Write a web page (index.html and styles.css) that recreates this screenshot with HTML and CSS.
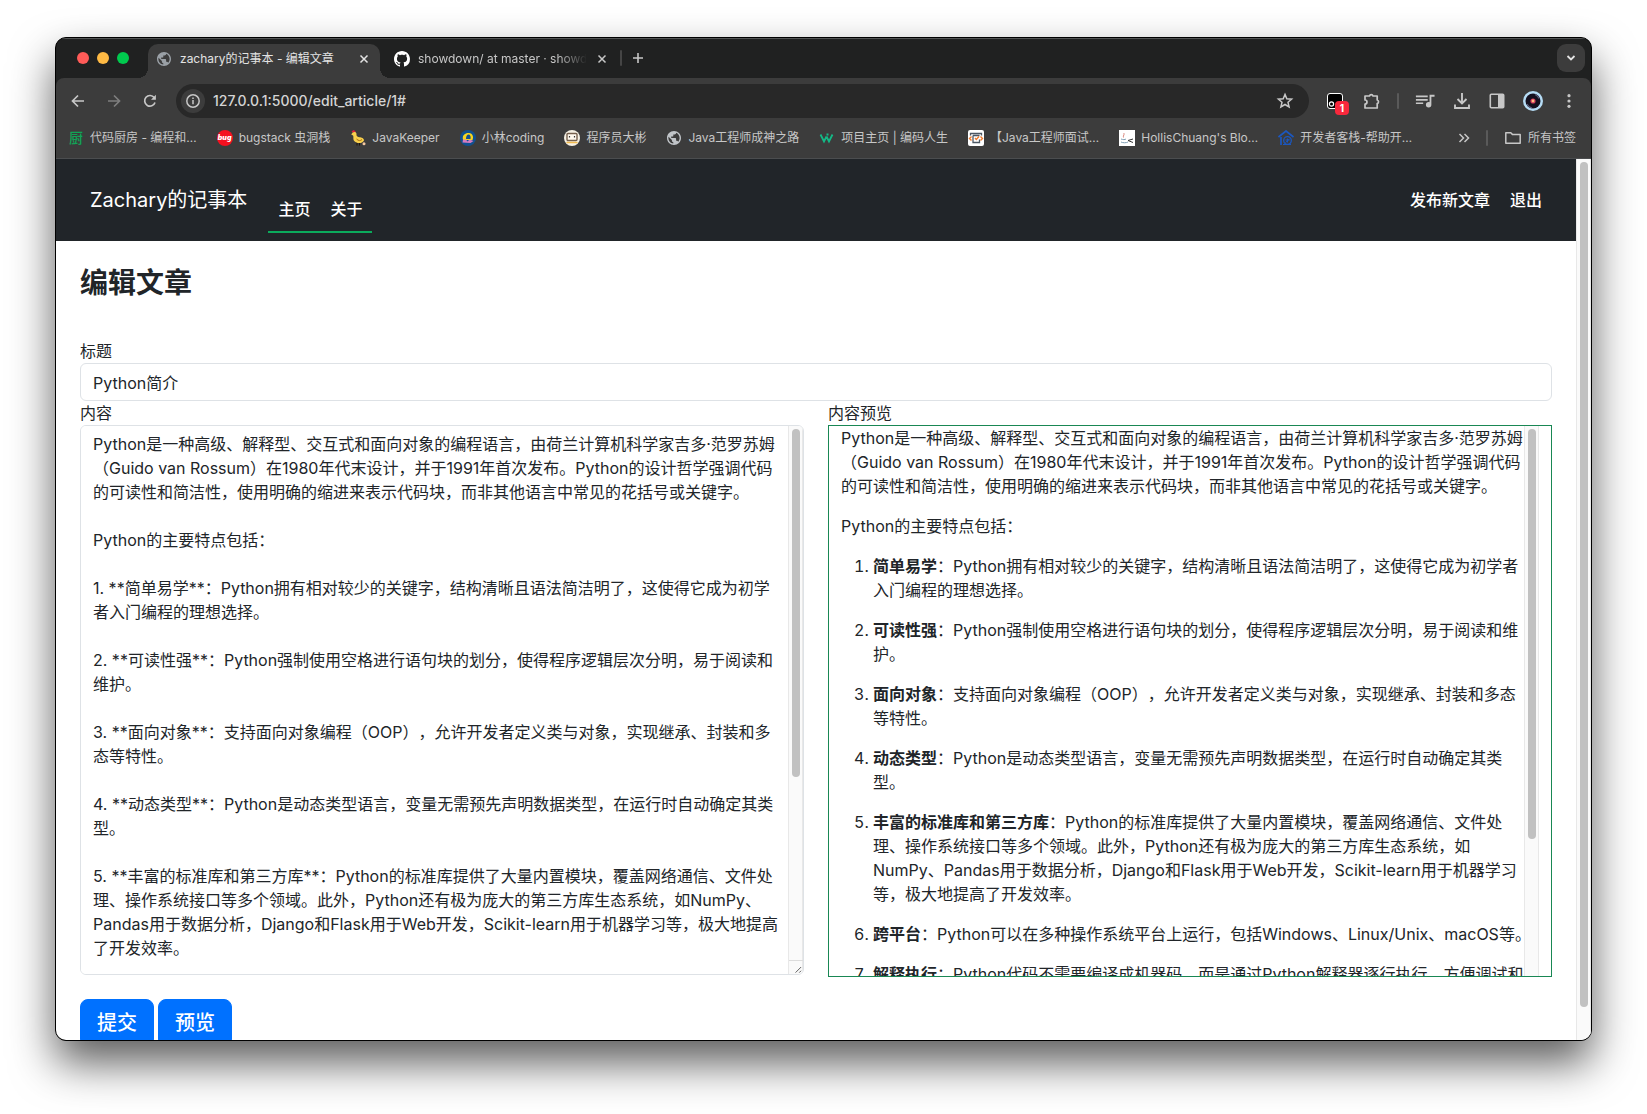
FILE: index.html
```html
<!DOCTYPE html>
<html lang="zh-CN">
<head>
<meta charset="utf-8">
<title>zachary的记事本 - 编辑文章</title>
<link rel="stylesheet" href="styles.css">
</head>
<body>
<svg class="defs" aria-hidden="true">
  <symbol id="globe" viewBox="2 2 20 20"><path fill="currentColor" d="M12 2C6.480 2 2 6.480 2 12s4.480 10 10 10 10-4.480 10-10S17.520 2 12 2zm-1 17.930c-3.950-.490-7-3.850-7-7.930 0-.620.080-1.210.210-1.790L9 15v1c0 1.100.900 2 2 2v1.930zm6.900-2.540c-.260-.810-1-1.390-1.900-1.390h-1v-3c0-.550-.450-1-1-1H8v-2h2c.550 0 1-.450 1-1V7h2c1.100 0 2-.900 2-2v-.410c2.930 1.190 5 4.060 5 7.410 0 2.080-.800 3.970-2.100 5.390z"/></symbol>
  <symbol id="close" viewBox="0 0 10 10"><path d="M1.500 1.500l7 7M8.500 1.500l-7 7" stroke="currentColor" stroke-width="1.500" fill="none"/></symbol>
</svg>
<div class="window">
  <header class="tabstrip">
    <div class="lights"><span class="light red"></span><span class="light amber"></span><span class="light green"></span></div>
    <div class="tab active">
      <svg class="globe"><use href="#globe"/></svg>
      <span class="tab-title">zachary的记事本 - 编辑文章</span>
      <button class="tab-close" aria-label="关闭标签页"><svg width="10" height="10"><use href="#close"/></svg></button>
    </div>
    <div class="tab">
      <svg width="16" height="16" viewBox="0 0 16 16"><path fill="#fff" d="M8 0C3.580 0 0 3.580 0 8c0 3.540 2.290 6.530 5.470 7.590.400.070.550-.170.550-.380 0-.190-.010-.820-.010-1.490-2.010.370-2.530-.490-2.690-.940-.090-.230-.480-.940-.820-1.130-.280-.150-.680-.520-.010-.530.630-.010 1.080.580 1.230.820.720 1.210 1.870.870 2.330.660.070-.520.280-.870.510-1.070-1.780-.200-3.640-.890-3.640-3.950 0-.870.310-1.590.820-2.150-.080-.200-.360-1.020.080-2.120 0 0 .670-.210 2.200.820.640-.180 1.320-.270 2-.270s1.360.090 2 .270c1.530-1.040 2.200-.820 2.200-.820.440 1.100.160 1.920.080 2.120.510.560.820 1.270.820 2.150 0 3.070-1.870 3.750-3.650 3.950.290.250.540.730.540 1.480 0 1.070-.010 1.930-.010 2.200 0 .210.150.460.550.380A8.010 8.010 0 0 0 16 8c0-4.420-3.580-8-8-8z"/></svg>
      <span class="tab-title fade">showdown/ at master · showdown</span>
      <button class="tab-close" aria-label="关闭标签页"><svg width="10" height="10"><use href="#close"/></svg></button>
    </div>
    <span class="divider"></span>
    <button class="new-tab" aria-label="新标签页"><svg width="12" height="12" viewBox="0 0 12 12"><path d="M6 1v10M1 6h10" stroke="currentColor" stroke-width="1.600"/></svg></button>
    <button class="tab-search" aria-label="搜索标签页"><svg width="10" height="10" viewBox="0 0 10 10"><path d="M1.500 3l3.500 3.500L8.500 3" stroke="currentColor" stroke-width="1.800" fill="none"/></svg></button>
  </header>

  <div class="chrome">
    <div class="toolbar">
      <div class="nav-buttons">
        <button aria-label="后退"><svg width="14" height="14" viewBox="0 0 14 14"><path d="M13 7H2M7 1.500L1.500 7 7 12.500" stroke="currentColor" stroke-width="1.700" fill="none"/></svg></button>
        <button class="dim" aria-label="前进"><svg width="14" height="14" viewBox="0 0 14 14"><path d="M1 7h11M7 1.500L12.500 7 7 12.500" stroke="currentColor" stroke-width="1.700" fill="none"/></svg></button>
        <button aria-label="重新加载"><svg width="14" height="14" viewBox="0 0 14 14"><path d="M12 8.500A5.300 5.300 0 1 1 11.200 3.600" stroke="currentColor" stroke-width="1.700" fill="none"/><path d="M12.900.800v5H8z" fill="currentColor"/></svg></button>
      </div>
      <div class="omnibox">
        <button class="site-info" aria-label="查看网站信息"><svg width="16" height="16" viewBox="0 0 16 16"><circle cx="8" cy="8" r="6.200" fill="none" stroke="currentColor" stroke-width="1.500"/><path d="M8 7v4.200M8 4.600v1.500" stroke="currentColor" stroke-width="1.500"/></svg></button>
        <input class="url" type="text" aria-label="地址" value="127.0.0.1:5000/edit_article/1#">
        <button aria-label="收藏"><svg width="18" height="18" viewBox="0 0 18 18"><path d="M9 2.400l1.800 4.400 4.800.400-3.600 3.100 1.100 4.700L9 12.500 4.900 15 6 10.300 2.400 7.200l4.800-.400z" stroke="currentColor" stroke-width="1.500" fill="none"/></svg></button>
      </div>
      <div class="actions">
        <button class="ext" aria-label="扩展"><svg width="16" height="16" viewBox="0 0 16 16"><rect x=".5" y=".5" width="15" height="15" rx="2.500" fill="#000" stroke="#fff"/><circle cx="4.500" cy="11" r="2.100" fill="none" stroke="#fff" stroke-width="1.200"/></svg><span class="badge">1</span></button>
        <button aria-label="扩展程序"><svg width="18" height="18" viewBox="0 0 18 18"><path d="M2 4h4.500a1.800 1.800 0 0 1 3.500 0H14.200v4a1.900 1.900 0 0 1 0 3.600V16H2v-4a2 2 0 0 0 0-4z" stroke="currentColor" stroke-width="1.700" stroke-linejoin="round" fill="none"/></svg></button>
        <span class="divider"></span>
        <button aria-label="媒体控件"><svg width="20" height="20" viewBox="1 1 22 22"><path fill="currentColor" d="M15 6H2v1.800h13V6zm0 3.800H2v1.800h13V9.800zM2 15.400h8v-1.800H2v1.800zM17 5v8.400c-.300-.100-.650-.200-1-.200a3 3 0 1 0 3 3V7.300h3.500V5z"/></svg></button>
        <button aria-label="下载"><svg width="18" height="18" viewBox="0 0 18 18"><path d="M9 1v10M4.500 7L9 11.500 13.500 7M2 12.500V16h14v-3.500" stroke="currentColor" stroke-width="1.900" fill="none"/></svg></button>
        <button aria-label="侧边栏"><svg width="16" height="16" viewBox="0 0 16 16"><rect x="1.300" y="1.300" width="13.400" height="13.400" rx="1" stroke="currentColor" stroke-width="1.600" fill="none"/><path d="M9 1h5.500v14H9z" fill="currentColor"/></svg></button>
        <button aria-label="个人资料"><svg width="20" height="20" viewBox="0 0 20 20"><circle cx="10" cy="10" r="10" fill="#b5dcf5"/><circle cx="10" cy="10" r="7.500" fill="#14101f"/><path d="M4 13a7 7 0 0 0 5 4M12 3.500a7 7 0 0 1 4 4" stroke="#5a5e7c" stroke-width="1.200" fill="none"/><circle cx="10" cy="10" r="2.600" fill="#d03a5c"/><circle cx="10" cy="10" r="1.400" fill="#ffc080"/></svg></button>
        <button aria-label="更多"><svg width="16" height="16" viewBox="0 0 16 16" fill="currentColor"><circle cx="8" cy="2.700" r="1.600"/><circle cx="8" cy="8" r="1.600"/><circle cx="8" cy="13.300" r="1.600"/></svg></button>
      </div>
    </div>
    <nav class="bookmarks" aria-label="书签栏">
      <a href="#"><span class="char-icon">厨</span>代码厨房 - 编程和…</a>
      <a href="#"><span class="bug-icon">bug</span>bugstack 虫洞栈</a>
      <a href="#"><svg width="16" height="16" viewBox="0 0 16 16"><path d="M7 12v3.500M9.500 12v3.500" stroke="#1d1208"/><path d="M1.200 4.500L3 2C5 1 7 2.500 6.500 5c0 1.500 1.500 2 3 2.300 2 .300 4.500.700 4.500 3.200-1.500 3-7 3.600-9.500.800C2.500 9 4 7 3 5.500z" fill="#f8cf4c"/><path d="M6.500 9c2 2 4 2 5.500.500" stroke="#a86f13" fill="none"/><path d="M1.500 1.500L3.500 0l2.500 1.500-3 1z" fill="#d8213c"/><circle cx="14" cy="13.800" r="1.500" fill="#f6c8a0"/></svg>JavaKeeper</a>
      <a href="#"><svg width="16" height="16" viewBox="0 0 16 16"><circle cx="8" cy="8" r="8" fill="#10508f"/><path d="M3 10C1.800 4.500 6 2.600 9 3c3.600.400 5 4 3.500 7z" fill="#f6d51d"/><path d="M6 9c0-3 1-4.500 2.500-4.500S11 6 10.500 9z" fill="#14508f"/><path d="M3 9.500h3l1.500 2 2-2 4 1.500-3 2-8-.500z" fill="#d67cc0"/></svg>小林coding</a>
      <a href="#"><svg width="16" height="16" viewBox="0 0 16 16"><circle cx="8" cy="8" r="8" fill="#f6f1e4"/><rect x="3" y="3.500" width="10" height="7" rx="1" fill="#fff9ee" stroke="#75604d" stroke-width="1.400"/><path d="M5.500 6v1.500M10.500 6v1.500" stroke="#333" stroke-width="1.200"/><path d="M2.500 12.500h11" stroke="#f2bb4f" stroke-width="1.500"/></svg>程序员大彬</a>
      <a href="#"><svg class="globe"><use href="#globe"/></svg>Java工程师成神之路</a>
      <a href="#"><svg width="16" height="16" viewBox="0 0 16 16"><path d="M1.500 4.500L5 11.500l2.500-5M7.500 6.500L10 11.500l3.500-7M7.500 4.500h2" stroke="#14b886" stroke-width="1.800" fill="none"/></svg>项目主页 | 编码人生</a>
      <a href="#"><svg width="16" height="16" viewBox="0 0 16 16"><rect width="16" height="16" rx="2" fill="#fff"/><path d="M2.500 5.500v-2h11v2M5 5.500v7h6.500v-3M5 5.500h6.500" stroke="#4c5763" stroke-width="1.300" fill="none"/><path d="M3.500 6.500L1.500 8.500l2 2M12.500 6.500l2 2-2 2M7 8l1.300 1.500L11 6.500" stroke="#ee7a2d" stroke-width="1.400" fill="none"/></svg>【Java工程师面试…</a>
      <a href="#"><svg width="16" height="16" viewBox="0 0 16 16"><path d="M0 0h16v16H0z" fill="#fff"/><path d="M4.500 3c2 1-1 2.500 0 4.500" stroke="#dc8a80" fill="none"/><path d="M2 9c2 .800 4 .800 5 0M2 12c2 1 5 1 7 0" stroke="#7f9fb5" fill="none"/><path d="M14 9l-5 1.500 5 2" stroke="#333" fill="none"/></svg>HollisChuang's Blo…</a>
      <a href="#"><svg width="16" height="16" viewBox="0 0 16 16"><path d="M.500 7L8 1l7.500 6M3 7v8" stroke="#1b57c0" stroke-width="1.700" fill="none"/><circle cx="9.500" cy="10.500" r="3.800" stroke="#1b57c0" stroke-width="1.300" fill="none"/><path d="M7.500 10h4M9.500 8.500v4M5 14.500h8M7.500 12.500l4-3.500" stroke="#1b57c0"/></svg>开发者客栈-帮助开…</a>
      <button class="more" aria-label="更多书签"><svg width="12" height="12" viewBox="0 0 12 12"><path d="M1.500 2l4 4-4 4M6.500 2l4 4-4 4" stroke="currentColor" stroke-width="1.500" fill="none"/></svg></button>
      <span class="divider"></span>
      <a class="all" href="#"><svg width="18" height="16" viewBox="0 0 18 16"><path d="M1.800 13.200V2.800h5l1.800 1.800h7.600v8.600z" stroke="currentColor" stroke-width="1.500" stroke-linejoin="round" fill="none"/></svg>所有书签</a>
    </nav>
  </div>

  <div class="viewport">
    <div class="page">
      <nav class="navbar">
        <a class="brand" href="#">Zachary的记事本</a>
        <div class="menu"><a href="#">主页</a><a href="#">关于</a></div>
        <div class="account"><a href="#">发布新文章</a><a href="#">退出</a></div>
      </nav>
      <main>
        <h1>编辑文章</h1>
        <form>
          <label for="title">标题</label>
          <input class="title-input" id="title" type="text" value="Python简介">
          <div class="columns">
            <div class="column">
              <label for="content">内容</label>
              <div class="editor">
<textarea id="content">Python是一种高级、解释型、交互式和面向对象的编程语言，由荷兰计算机科学家吉多·范罗苏姆（Guido van Rossum）在1980年代末设计，并于1991年首次发布。Python的设计哲学强调代码的可读性和简洁性，使用明确的缩进来表示代码块，而非其他语言中常见的花括号或关键字。

Python的主要特点包括：

1. **简单易学**：Python拥有相对较少的关键字，结构清晰且语法简洁明了，这使得它成为初学者入门编程的理想选择。

2. **可读性强**：Python强制使用空格进行语句块的划分，使得程序逻辑层次分明，易于阅读和维护。

3. **面向对象**：支持面向对象编程（OOP），允许开发者定义类与对象，实现继承、封装和多态等特性。

4. **动态类型**：Python是动态类型语言，变量无需预先声明数据类型，在运行时自动确定其类型。

5. **丰富的标准库和第三方库**：Python的标准库提供了大量内置模块，覆盖网络通信、文件处理、操作系统接口等多个领域。此外，Python还有极为庞大的第三方库生态系统，如NumPy、Pandas用于数据分析，Django和Flask用于Web开发，Scikit-learn用于机器学习等，极大地提高了开发效率。
</textarea>
                <div class="scrollbar"><span class="thumb editor-thumb"></span><svg class="grip" viewBox="0 0 14 14"><path d="M6.500 12.500l6-6M10.500 12.500l2-2" stroke="#555"/></svg></div>
              </div>
            </div>
            <div class="column">
              <div class="label">内容预览</div>
              <div class="preview">
                <div class="rendered">
                  <p>Python是一种高级、解释型、交互式和面向对象的编程语言，由荷兰计算机科学家吉多·范罗苏姆（Guido van Rossum）在1980年代末设计，并于1991年首次发布。Python的设计哲学强调代码的可读性和简洁性，使用明确的缩进来表示代码块，而非其他语言中常见的花括号或关键字。</p>
                  <p>Python的主要特点包括：</p>
                  <ol>
                    <li><p><strong>简单易学</strong>：Python拥有相对较少的关键字，结构清晰且语法简洁明了，这使得它成为初学者入门编程的理想选择。</p></li>
                    <li><p><strong>可读性强</strong>：Python强制使用空格进行语句块的划分，使得程序逻辑层次分明，易于阅读和维护。</p></li>
                    <li><p><strong>面向对象</strong>：支持面向对象编程（OOP），允许开发者定义类与对象，实现继承、封装和多态等特性。</p></li>
                    <li><p><strong>动态类型</strong>：Python是动态类型语言，变量无需预先声明数据类型，在运行时自动确定其类型。</p></li>
                    <li><p><strong>丰富的标准库和第三方库</strong>：Python的标准库提供了大量内置模块，覆盖网络通信、文件处理、操作系统接口等多个领域。此外，Python还有极为庞大的第三方库生态系统，如NumPy、Pandas用于数据分析，Django和Flask用于Web开发，Scikit-learn用于机器学习等，极大地提高了开发效率。</p></li>
                    <li><p class="single"><strong>跨平台</strong>：Python可以在多种操作系统平台上运行，包括Windows、Linux/Unix、macOS等。</p></li>
                    <li><p class="single"><strong>解释执行</strong>：Python代码不需要编译成机器码，而是通过Python解释器逐行执行，方便调试和</p></li>
                  </ol>
                </div>
                <div class="scrollbar"><span class="thumb preview-thumb"></span></div>
              </div>
            </div>
          </div>
          <div class="buttons">
            <button class="btn" type="button">提交</button>
            <button class="btn" type="button">预览</button>
          </div>
        </form>
      </main>
    </div>
    <div class="scrollbar"><span class="thumb page-thumb"></span></div>
  </div>
</div>
</body>
</html>
```
FILE: styles.css
```css
* { box-sizing: border-box; }

body {
  margin: 0;
  height: 100vh;
  padding: 37px 55px 73px;
  overflow: hidden;
  background: #fff;
  color: #212529;
  font: 16px/24px Inter, "Noto Sans CJK SC", sans-serif;
  text-spacing-trim: space-all;
}

button, input, textarea { font: inherit; color: inherit; }
button { border: 0; padding: 0; background: none; }
a { color: inherit; text-decoration: none; }
svg { display: block; flex: none; }
.defs { position: absolute; width: 0; height: 0; }

.window {
  display: flex;
  flex-direction: column;
  height: 100%;
  border: 1px solid #000;
  border-radius: 11px;
  overflow: hidden;
  background: #202121;
  box-shadow: 0 22px 44px rgba(0, 0, 0, .64);
}

/* Tab strip */
.tabstrip {
  display: flex;
  align-items: center;
  flex: none;
  height: 40px;
  padding: 0 6px 0 21px;
  box-shadow: inset 0 1px #525454;
  font-size: 12px;
  color: #c7c7c7;
}
.lights { display: flex; gap: 8px; margin-right: 19px; }
.light { width: 12px; height: 12px; border-radius: 50%; }
.red { background: #ff5b58; }
.amber { background: #ffba44; }
.green { background: #00ca4e; }
.tab {
  display: flex;
  align-items: center;
  align-self: flex-end;
  width: 232px;
  height: 34px;
  padding: 0 4px 5px 14px;
}
.tab.active {
  position: relative;
  padding: 0 10px 5px 8px;
  border-radius: 10px 10px 0 0;
  background: #3c3c3c;
  color: #e3e3e3;
}
.tab.active::before, .tab.active::after {
  content: "";
  position: absolute;
  bottom: 0;
  width: 10px;
  height: 10px;
}
.tab.active::before { left: -10px; background: radial-gradient(circle at 0 0, transparent 10px, #3c3c3c 10px); }
.tab.active::after { right: -10px; background: radial-gradient(circle at 100% 0, transparent 10px, #3c3c3c 10px); }
.globe { width: 14px; height: 14px; margin: 0 1px; color: #9aa0a6; }
.tab-title { flex: 1; margin: 0 9px 0 8px; overflow: hidden; white-space: nowrap; }
.fade { -webkit-mask-image: linear-gradient(to right, #000 82%, transparent); mask-image: linear-gradient(to right, #000 82%, transparent); }
.tab .tab-close { width: 12px; display: flex; justify-content: center; }
.divider { width: 2px; height: 16px; border-radius: 1px; background: #5a5a5a; }
.tabstrip .divider { background: #454545; margin-left: 8px; }
.new-tab { width: 32px; display: flex; justify-content: center; }
.tab-search {
  display: flex;
  align-items: center;
  justify-content: center;
  width: 28px;
  height: 28px;
  margin-left: auto;
  border-radius: 9px;
  background: #3c3c3c;
  color: #e3e3e3;
}

/* Toolbar and bookmarks */
.chrome {
  flex: none;
  border-radius: 8px 8px 0 0;
  border-bottom: 1px solid #4b4d4f;
  background: #3c3c3c;
  color: #c7c7c7;
}
.toolbar { display: flex; align-items: center; height: 46px; padding: 0 14px 0 15px; }
.nav-buttons { display: flex; gap: 22px; margin-right: 19px; }
.dim { color: #7e7e7e; }
.omnibox {
  display: flex;
  align-items: center;
  flex: 1;
  height: 34px;
  padding: 0 15px 0 5px;
  border-radius: 17px;
  background: #282828;
}
.site-info {
  display: flex;
  align-items: center;
  justify-content: center;
  width: 24px;
  height: 24px;
  margin-right: 8px;
  border-radius: 50%;
  background: #3c3c3c;
}
.url { flex: 1; padding: 0; border: 0; outline: 0; background: none; color: #d4d4d4; font-size: 14px; font-weight: 500; }
.actions { display: flex; align-items: center; gap: 18px; margin-left: 18px; }
.actions .divider { margin: 0 -2px; }
.ext { position: relative; margin-right: 2px; }
.badge {
  position: absolute;
  left: 8px;
  top: 8px;
  width: 14px;
  height: 14px;
  border-radius: 4px;
  background: #f8283c;
  color: #fff;
  font-size: 10px;
  font-weight: 700;
  line-height: 14px;
}
.bookmarks {
  display: flex;
  align-items: center;
  gap: 20px;
  height: 34px;
  padding: 0 15px 6px 12px;
  font-size: 12px;
  white-space: nowrap;
}
.bookmarks a { display: flex; align-items: center; gap: 6px; }
.bookmarks .globe { color: #c0c4c8; }
.char-icon { width: 16px; color: #10a557; font-size: 14px; font-weight: 500; text-align: center; }
.bug-icon {
  width: 16px;
  height: 16px;
  border-radius: 50%;
  background: #f5101f;
  color: #fff;
  font-size: 7px;
  font-style: italic;
  font-weight: 900;
  line-height: 16px;
  text-align: center;
}
.more { margin-left: auto; }
.bookmarks .divider { margin: 0 -4px; }

/* Page */
.viewport { display: flex; flex: 1; min-height: 0; overflow: hidden; background: #fff; }
.page { flex: 1; min-width: 0; overflow: hidden; }
.navbar {
  display: flex;
  align-items: center;
  height: 82px;
  padding: 0 24px 0 34px;
  background: #212529;
  color: #fff;
}
.brand { margin-right: 21px; font-size: 20px; }
.menu { display: flex; margin-top: 30px; padding-bottom: 10px; border-bottom: 2px solid #0bab5c; }
.menu a, .account a { padding: 0 10px; font-weight: 500; }
.account { display: flex; margin-left: auto; }
main { padding: 24px; }
h1 { margin: 0 0 38px; font-size: 28px; font-weight: 600; line-height: 36px; }
label, .label { display: block; }
.title-input {
  display: block;
  width: 100%;
  height: 38px;
  padding: 6px 12px;
  border: 1px solid #dee2e6;
  border-radius: 6px;
}
.columns { display: grid; grid-template-columns: 1fr 1fr; gap: 24px; }
.column { min-width: 0; }
.editor {
  display: flex;
  height: 550px;
  border: 1px solid #dee2e6;
  border-radius: 6px;
  overflow: hidden;
}
textarea {
  flex: 1;
  min-width: 0;
  padding: 6px 8px 6px 12px;
  border: 0;
  outline: 0;
  resize: none;
  overflow: hidden;
  text-spacing-trim: space-all;
}
.preview { display: flex; height: 552px; padding: 0 12px; border: 1px solid #198754; overflow: hidden; }
.rendered { flex: 1; min-width: 0; }
.rendered p { margin: 0 0 16px; }
.rendered ol { margin: 0; padding-left: 32px; }
.rendered strong { font-weight: 700; }
.single { white-space: nowrap; }

.scrollbar {
  display: flex;
  flex-direction: column;
  flex: none;
  width: 15px;
  padding: 3px 0 0 3px;
  border: solid #e8e8e8;
  border-width: 0 1px;
  background: #fafafa;
}
.thumb { width: 8px; border-radius: 4px; background: #c1c1c1; }
.editor-thumb { height: 348px; }
.preview-thumb { height: 410px; }
.page-thumb { height: calc(100% - 33px); }
.grip { width: 14px; height: 14px; margin: auto 0 0 -3px; border-top: 1px solid #dcdcdc; }

.buttons { display: flex; gap: 4px; margin-top: 22px; }
.btn {
  height: 48px;
  padding: 8px 16px;
  border: 1px solid #0071ff;
  border-radius: 8px;
  background: #0071ff;
  color: #fff;
  font-size: 20px;
  font-weight: 500;
  line-height: 30px;
}
```
